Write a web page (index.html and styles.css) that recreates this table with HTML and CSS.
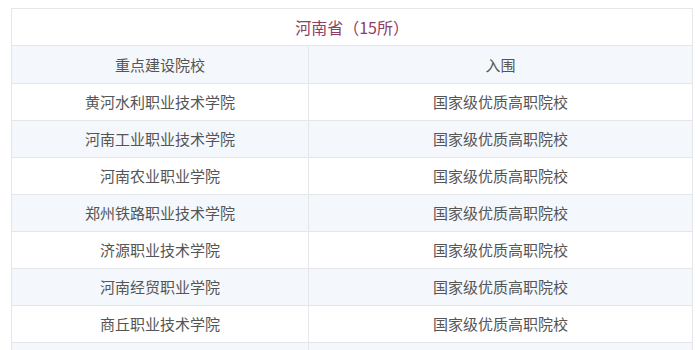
FILE: index.html
```html
<!DOCTYPE html>
<html lang="zh">
<head>
<meta charset="utf-8">
<link rel="stylesheet" href="styles.css">
</head>
<body>
<table class="list">
  <colgroup><col class="col1"><col class="col2"></colgroup>
  <tr class="title"><td colspan="2">河南省（15所）</td></tr>
  <tr class="head alt"><td>重点建设院校</td><td>入围</td></tr>
  <tr><td>黄河水利职业技术学院</td><td>国家级优质高职院校</td></tr>
  <tr class="alt"><td>河南工业职业技术学院</td><td>国家级优质高职院校</td></tr>
  <tr><td>河南农业职业学院</td><td>国家级优质高职院校</td></tr>
  <tr class="alt"><td>郑州铁路职业技术学院</td><td>国家级优质高职院校</td></tr>
  <tr><td>济源职业技术学院</td><td>国家级优质高职院校</td></tr>
  <tr class="alt"><td>河南经贸职业学院</td><td>国家级优质高职院校</td></tr>
  <tr><td>商丘职业技术学院</td><td>国家级优质高职院校</td></tr>
  <tr class="alt"><td>郑州电力高等专科学校</td><td>国家级优质高职院校</td></tr>
</table>
</body>
</html>
```
FILE: styles.css
```css
html, body {
  margin: 0;
  padding: 0;
  background: #ffffff;
}
body {
  padding: 8px 0 0 11px;
  font-family: "Noto Sans CJK SC", "Liberation Sans", sans-serif;
  color: #555555;
  overflow: hidden;
}
.list {
  border-collapse: collapse;
  width: 681px;
  table-layout: fixed;
}
.col1 {
  width: 297px;
}
.col2 {
  width: 384px;
}
.list td {
  border: 1px solid #e4e6e9;
  text-align: center;
  font-size: 15px;
  height: 36px;
  padding: 0;
  line-height: 20px;
}
.title td {
  height: 36px;
  font-size: 16px;
  color: #8e3d64;
}
.head td {
  height: 37px;
}
.alt td {
  background: #f4f8fc;
}
```
